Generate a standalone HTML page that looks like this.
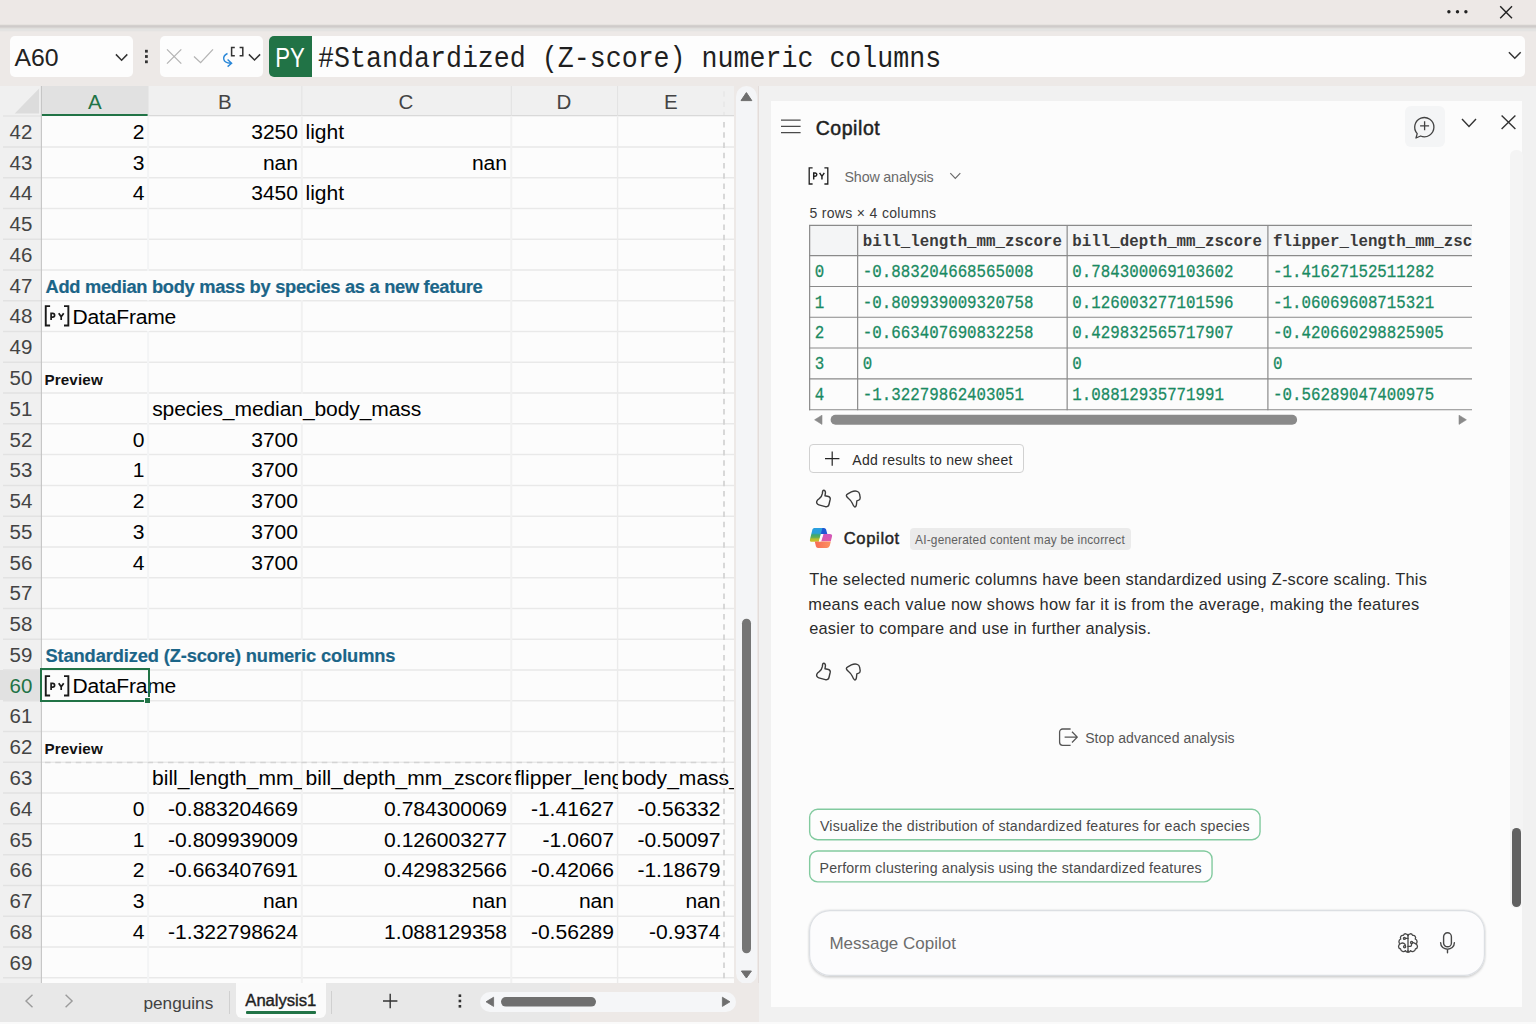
<!DOCTYPE html><html><head><meta charset="utf-8"><title>Excel</title><style>
*{box-sizing:border-box;margin:0;padding:0}
html,body{width:1536px;height:1024px;overflow:hidden;background:#fff}
body{font-family:"Liberation Sans",sans-serif;position:relative;color:#000}
.abs{position:absolute}
#top{left:0;top:0;width:1536px;height:26px;background:#ede8e6}
#topsh{left:0;top:24px;width:1536px;height:8px;background:linear-gradient(#e6e2df 0,#e6e2df 12.5%,#d3cfcd 12.5%,#d3cfcd 25%,#cfcbca 25%,#cfcbca 37.5%,#d6d3d1 37.5%,#d6d3d1 50%,#e0dedc 50%,#e0dedc 62.5%,#e3e3e2 62.5%,#e3e3e2 75%,#e4e3e2 75%,#e4e3e2 87.5%,#eae7e5 87.5%)}
#fbar{left:0;top:28px;width:1536px;height:58px;background:#ede9e7}
.wbox{background:#fdfdfd;border-radius:5px}
#sheet{left:0;top:86px;width:734px;height:897px;background:#fcfcfc;overflow:hidden}
#sheetbg{left:0;top:86px;width:759px;height:897px;background:#ede9e7}
#colhdr{left:0;top:0;width:734px;height:30px;background:#f0f0f0}
#rowhdr{left:0;top:0;width:41px;height:897px;background:#f0f0f0}
.ch{top:0;height:29px;line-height:31px;text-align:center;font-size:20.5px;color:#444}
.rh{left:0.5px;width:41px;text-align:center;font-size:20.5px;color:#444;height:30.77px;line-height:31.5px}
.hl{left:0;height:1px;background:#e3e3e3}
.vl{top:30px;width:1px;background:#e3e3e3;height:870px}
.c{white-space:nowrap;overflow:hidden;font-size:21.06px;height:30px;line-height:31.5px;color:#000}
.r{text-align:right}
.t{font-weight:bold;color:#1d6a8e;font-size:17.6px;overflow:visible}
.p{font-weight:bold;font-size:15px;overflow:visible;line-height:34px}
#pane{left:759px;top:86px;width:777px;height:936px;background:#f1f1f1}
#card{left:771px;top:101px;width:751.4px;height:905.8px;background:#fcfcfc}
#tabs{left:0;top:983px;width:759px;height:39px;background:#e8e8e8}
.g{color:#424242}
</style></head><body>
<div class="abs" id="top"></div><div class="abs" id="fbar"></div><div class="abs" id="topsh"></div>
<svg class="abs" style="left:1440px;top:0" width="90" height="26"><circle cx="8.9" cy="11.8" r="1.7" fill="#222"/><circle cx="17.5" cy="11.8" r="1.7" fill="#222"/><circle cx="25.9" cy="11.8" r="1.7" fill="#222"/><path d="M60.2 6.3 L72 18.2 M72 6.3 L60.2 18.2" stroke="#222" stroke-width="1.4" fill="none"/></svg>
<div class="abs wbox" style="left:10px;top:36px;width:123.3px;height:41px"></div>
<div class="abs" style="left:14.5px;top:36px;height:41px;line-height:44.4px;font-size:24.8px;color:#222;letter-spacing:-0.1px">A60</div>
<svg class="abs" style="left:112px;top:48px" width="20" height="20"><path d="M3.9 6.4 L9.6 12.2 L15.3 6.4" stroke="#333" stroke-width="1.5" fill="none"/></svg>
<svg class="abs" style="left:140px;top:46px" width="12" height="22"><rect x="5" y="3.8" width="2.8" height="2.8" fill="#333"/><rect x="5" y="9.1" width="2.8" height="2.8" fill="#333"/><rect x="5" y="14.4" width="2.8" height="2.8" fill="#333"/></svg>
<div class="abs wbox" style="left:160px;top:36px;width:103px;height:41px"></div>
<svg class="abs" style="left:160px;top:36px" width="103" height="41"><path d="M7 13.4 L21.3 27.6 M21.3 13.4 L7 27.6" stroke="#b4b4b4" stroke-width="1.3" fill="none"/><path d="M34 20.5 L40.6 26.7 L53 13.4" stroke="#b4b4b4" stroke-width="1.3" fill="none"/><path d="M67.5 17.5 C62 20 62 27 70.5 27.3 M67.6 23.6 L71.6 27.3 L67.6 30.6" stroke="#2b88d8" stroke-width="1.4" fill="none"/><path d="M74.8 11.6 H71.6 V19.8 H74.8 M79.6 11.6 H82.8 V19.8 H79.6" stroke="#333" stroke-width="1.5" fill="none"/><path d="M88.9 18.4 L94.5 24 L100.1 18.4" stroke="#333" stroke-width="1.5" fill="none"/></svg>
<div class="abs wbox" style="left:269px;top:36px;width:1256.3px;height:41px"></div>
<div class="abs" style="left:269px;top:36px;width:43px;height:41px;background:#217346;border-radius:5px 0 0 5px"></div>
<div class="abs" style="left:269px;top:36px;width:43px;height:41px;line-height:44.6px;text-align:center;color:#fff;font-size:27px"><span style="display:inline-block;transform:scaleX(0.82)">PY</span></div>
<div class="abs" style="left:318.1px;top:40.1px;height:41px;line-height:41px;font-family:'Liberation Mono',monospace;font-size:26.63px;color:#1f1f1f;white-space:pre;transform:scaleY(1.09);transform-origin:0 31px">#Standardized (Z-score) numeric columns</div>
<svg class="abs" style="left:1504px;top:46px" width="22" height="20"><path d="M4.9 6.3 L10.8 12.2 L16.7 6.3" stroke="#333" stroke-width="1.5" fill="none"/></svg>
<div class="abs" id="sheetbg"></div>
<div class="abs" id="sheet">
<div class="abs" id="colhdr"></div><div class="abs" id="rowhdr"></div>
<div class="abs" style="left:41px;top:0;width:107px;height:30px;background:#e1e1e1;border-bottom:2px solid #217346"></div>
<div class="abs" style="left:0;top:583.71px;width:41px;height:30.77px;background:#e1e1e1"></div>
<svg class="abs" style="left:0;top:0" width="41" height="30"><path d="M39.1 2.6 L39.1 27.6 L14.7 27.6 Z" fill="#dcdcdc"/></svg>
<div class="abs ch" style="left:41.5px;width:106.5px;color:#217346">A</div>
<div class="abs ch" style="left:148px;width:153.5px;color:#444">B</div>
<div class="abs ch" style="left:301.5px;width:209.0px;color:#444">C</div>
<div class="abs ch" style="left:510.5px;width:107.0px;color:#444">D</div>
<div class="abs ch" style="left:617.5px;width:106.5px;color:#444">E</div>
<svg class="abs" style="left:0;top:0" width="734" height="897"><line x1="3" y1="30" x2="41" y2="30" stroke="#e4e4e4" stroke-width="1.6"/><line x1="148" y1="29.8" x2="734" y2="29.8" stroke="#d2d2d2" stroke-width="1.1"/><line x1="3" y1="60.92" x2="41" y2="60.92" stroke="#e2e2e2" stroke-width="1.5"/><line x1="41" y1="60.92" x2="734" y2="60.92" stroke="#e9e9e9" stroke-width="1.5"/><line x1="3" y1="91.69" x2="41" y2="91.69" stroke="#e2e2e2" stroke-width="1.5"/><line x1="41" y1="91.69" x2="734" y2="91.69" stroke="#e9e9e9" stroke-width="1.5"/><line x1="3" y1="122.46" x2="41" y2="122.46" stroke="#e2e2e2" stroke-width="1.5"/><line x1="41" y1="122.46" x2="734" y2="122.46" stroke="#e9e9e9" stroke-width="1.5"/><line x1="3" y1="153.23" x2="41" y2="153.23" stroke="#e2e2e2" stroke-width="1.5"/><line x1="41" y1="153.23" x2="734" y2="153.23" stroke="#e9e9e9" stroke-width="1.5"/><line x1="3" y1="184.00" x2="41" y2="184.00" stroke="#e2e2e2" stroke-width="1.5"/><line x1="41" y1="184.00" x2="734" y2="184.00" stroke="#e9e9e9" stroke-width="1.5"/><line x1="3" y1="214.77" x2="41" y2="214.77" stroke="#e2e2e2" stroke-width="1.5"/><line x1="41" y1="214.77" x2="734" y2="214.77" stroke="#e9e9e9" stroke-width="1.5"/><line x1="3" y1="245.54" x2="41" y2="245.54" stroke="#e2e2e2" stroke-width="1.5"/><line x1="41" y1="245.54" x2="734" y2="245.54" stroke="#e9e9e9" stroke-width="1.5"/><line x1="3" y1="276.31" x2="41" y2="276.31" stroke="#e2e2e2" stroke-width="1.5"/><line x1="41" y1="276.31" x2="734" y2="276.31" stroke="#e9e9e9" stroke-width="1.5"/><line x1="3" y1="307.08" x2="41" y2="307.08" stroke="#e2e2e2" stroke-width="1.5"/><line x1="41" y1="307.08" x2="734" y2="307.08" stroke="#e9e9e9" stroke-width="1.5"/><line x1="3" y1="337.85" x2="41" y2="337.85" stroke="#e2e2e2" stroke-width="1.5"/><line x1="41" y1="337.85" x2="734" y2="337.85" stroke="#e9e9e9" stroke-width="1.5"/><line x1="3" y1="368.62" x2="41" y2="368.62" stroke="#e2e2e2" stroke-width="1.5"/><line x1="41" y1="368.62" x2="734" y2="368.62" stroke="#e9e9e9" stroke-width="1.5"/><line x1="3" y1="399.39" x2="41" y2="399.39" stroke="#e2e2e2" stroke-width="1.5"/><line x1="41" y1="399.39" x2="734" y2="399.39" stroke="#e9e9e9" stroke-width="1.5"/><line x1="3" y1="430.16" x2="41" y2="430.16" stroke="#e2e2e2" stroke-width="1.5"/><line x1="41" y1="430.16" x2="734" y2="430.16" stroke="#e9e9e9" stroke-width="1.5"/><line x1="3" y1="460.93" x2="41" y2="460.93" stroke="#e2e2e2" stroke-width="1.5"/><line x1="41" y1="460.93" x2="734" y2="460.93" stroke="#e9e9e9" stroke-width="1.5"/><line x1="3" y1="491.70" x2="41" y2="491.70" stroke="#e2e2e2" stroke-width="1.5"/><line x1="41" y1="491.70" x2="734" y2="491.70" stroke="#e9e9e9" stroke-width="1.5"/><line x1="3" y1="522.47" x2="41" y2="522.47" stroke="#e2e2e2" stroke-width="1.5"/><line x1="41" y1="522.47" x2="734" y2="522.47" stroke="#e9e9e9" stroke-width="1.5"/><line x1="3" y1="553.24" x2="41" y2="553.24" stroke="#e2e2e2" stroke-width="1.5"/><line x1="41" y1="553.24" x2="734" y2="553.24" stroke="#e9e9e9" stroke-width="1.5"/><line x1="3" y1="584.01" x2="41" y2="584.01" stroke="#e2e2e2" stroke-width="1.5"/><line x1="41" y1="584.01" x2="734" y2="584.01" stroke="#e9e9e9" stroke-width="1.5"/><line x1="3" y1="614.78" x2="41" y2="614.78" stroke="#e2e2e2" stroke-width="1.5"/><line x1="41" y1="614.78" x2="734" y2="614.78" stroke="#e9e9e9" stroke-width="1.5"/><line x1="3" y1="645.55" x2="41" y2="645.55" stroke="#e2e2e2" stroke-width="1.5"/><line x1="41" y1="645.55" x2="734" y2="645.55" stroke="#e9e9e9" stroke-width="1.5"/><line x1="3" y1="676.32" x2="41" y2="676.32" stroke="#e2e2e2" stroke-width="1.5"/><line x1="41" y1="676.32" x2="734" y2="676.32" stroke="#e9e9e9" stroke-width="1.5"/><line x1="3" y1="707.09" x2="41" y2="707.09" stroke="#e2e2e2" stroke-width="1.5"/><line x1="41" y1="707.09" x2="734" y2="707.09" stroke="#e9e9e9" stroke-width="1.5"/><line x1="3" y1="737.86" x2="41" y2="737.86" stroke="#e2e2e2" stroke-width="1.5"/><line x1="41" y1="737.86" x2="734" y2="737.86" stroke="#e9e9e9" stroke-width="1.5"/><line x1="3" y1="768.63" x2="41" y2="768.63" stroke="#e2e2e2" stroke-width="1.5"/><line x1="41" y1="768.63" x2="734" y2="768.63" stroke="#e9e9e9" stroke-width="1.5"/><line x1="3" y1="799.40" x2="41" y2="799.40" stroke="#e2e2e2" stroke-width="1.5"/><line x1="41" y1="799.40" x2="734" y2="799.40" stroke="#e9e9e9" stroke-width="1.5"/><line x1="3" y1="830.17" x2="41" y2="830.17" stroke="#e2e2e2" stroke-width="1.5"/><line x1="41" y1="830.17" x2="734" y2="830.17" stroke="#e9e9e9" stroke-width="1.5"/><line x1="3" y1="860.94" x2="41" y2="860.94" stroke="#e2e2e2" stroke-width="1.5"/><line x1="41" y1="860.94" x2="734" y2="860.94" stroke="#e9e9e9" stroke-width="1.5"/><line x1="3" y1="891.71" x2="41" y2="891.71" stroke="#e2e2e2" stroke-width="1.5"/><line x1="41" y1="891.71" x2="734" y2="891.71" stroke="#e9e9e9" stroke-width="1.5"/><line x1="3" y1="922.48" x2="41" y2="922.48" stroke="#e2e2e2" stroke-width="1.5"/><line x1="41" y1="922.48" x2="734" y2="922.48" stroke="#e9e9e9" stroke-width="1.5"/><line x1="148.1" y1="0" x2="148.1" y2="30" stroke="#e2e2e2" stroke-width="1"/><line x1="148.1" y1="30.5" x2="148.1" y2="897" stroke="#f3f4f5" stroke-width="2.0"/><line x1="301.85" y1="0" x2="301.85" y2="30" stroke="#e2e2e2" stroke-width="1"/><line x1="301.85" y1="30.5" x2="301.85" y2="897" stroke="#f1f1f1" stroke-width="2.0"/><line x1="511.3" y1="0" x2="511.3" y2="30" stroke="#e2e2e2" stroke-width="1"/><line x1="511.3" y1="30.5" x2="511.3" y2="897" stroke="#f1f1f1" stroke-width="2.0"/><line x1="617.6" y1="0" x2="617.6" y2="30" stroke="#e2e2e2" stroke-width="1"/><line x1="617.6" y1="30.5" x2="617.6" y2="897" stroke="#ebebeb" stroke-width="1.4"/><line x1="41.4" y1="0" x2="41.4" y2="897" stroke="#c4c4c4" stroke-width="1.1"/></svg>
<div class="abs rh" style="top:29.85px;color:#444">42</div>
<div class="abs rh" style="top:60.62px;color:#444">43</div>
<div class="abs rh" style="top:91.39px;color:#444">44</div>
<div class="abs rh" style="top:122.16px;color:#444">45</div>
<div class="abs rh" style="top:152.93px;color:#444">46</div>
<div class="abs rh" style="top:183.70px;color:#444">47</div>
<div class="abs rh" style="top:214.47px;color:#444">48</div>
<div class="abs rh" style="top:245.24px;color:#444">49</div>
<div class="abs rh" style="top:276.01px;color:#444">50</div>
<div class="abs rh" style="top:306.78px;color:#444">51</div>
<div class="abs rh" style="top:337.55px;color:#444">52</div>
<div class="abs rh" style="top:368.32px;color:#444">53</div>
<div class="abs rh" style="top:399.09px;color:#444">54</div>
<div class="abs rh" style="top:429.86px;color:#444">55</div>
<div class="abs rh" style="top:460.63px;color:#444">56</div>
<div class="abs rh" style="top:491.40px;color:#444">57</div>
<div class="abs rh" style="top:522.17px;color:#444">58</div>
<div class="abs rh" style="top:552.94px;color:#444">59</div>
<div class="abs rh" style="top:583.71px;color:#217346">60</div>
<div class="abs rh" style="top:614.48px;color:#444">61</div>
<div class="abs rh" style="top:645.25px;color:#444">62</div>
<div class="abs rh" style="top:676.02px;color:#444">63</div>
<div class="abs rh" style="top:706.79px;color:#444">64</div>
<div class="abs rh" style="top:737.56px;color:#444">65</div>
<div class="abs rh" style="top:768.33px;color:#444">66</div>
<div class="abs rh" style="top:799.10px;color:#444">67</div>
<div class="abs rh" style="top:829.87px;color:#444">68</div>
<div class="abs rh" style="top:860.64px;color:#444">69</div>
<div class="abs" style="left:146.60px;top:184.90px;width:3px;height:28.87px;background:#fcfcfc"></div>
<div class="abs" style="left:300.35px;top:184.90px;width:3px;height:28.87px;background:#fcfcfc"></div>
<div class="abs" style="left:146.60px;top:215.67px;width:3px;height:28.87px;background:#fcfcfc"></div>
<div class="abs" style="left:300.35px;top:307.98px;width:3px;height:28.87px;background:#fcfcfc"></div>
<div class="abs" style="left:146.60px;top:554.14px;width:3px;height:28.87px;background:#fcfcfc"></div>
<div class="abs" style="left:300.35px;top:554.14px;width:3px;height:28.87px;background:#fcfcfc"></div>
<div class="abs" style="left:146.60px;top:584.91px;width:3px;height:28.87px;background:#fcfcfc"></div>
<div class="abs c r" style="left:41.5px;top:29.85px;width:106.5px;padding-left:4px;padding-right:3.5px;">2</div>
<div class="abs c r" style="left:148px;top:29.85px;width:153.5px;padding-left:4px;padding-right:3.5px;">3250</div>
<div class="abs c " style="left:301.5px;top:29.85px;width:209.0px;padding-left:4px;padding-right:3.5px;">light</div>
<div class="abs c r" style="left:41.5px;top:60.62px;width:106.5px;padding-left:4px;padding-right:3.5px;">3</div>
<div class="abs c r" style="left:148px;top:60.62px;width:153.5px;padding-left:4px;padding-right:3.5px;">nan</div>
<div class="abs c r" style="left:301.5px;top:60.62px;width:209.0px;padding-left:4px;padding-right:3.5px;">nan</div>
<div class="abs c r" style="left:41.5px;top:91.39px;width:106.5px;padding-left:4px;padding-right:3.5px;">4</div>
<div class="abs c r" style="left:148px;top:91.39px;width:153.5px;padding-left:4px;padding-right:3.5px;">3450</div>
<div class="abs c " style="left:301.5px;top:91.39px;width:209.0px;padding-left:4px;padding-right:3.5px;">light</div>
<div class="abs c r" style="left:41.5px;top:337.55px;width:106.5px;padding-left:4px;padding-right:3.5px;">0</div>
<div class="abs c r" style="left:148px;top:337.55px;width:153.5px;padding-left:4px;padding-right:3.5px;">3700</div>
<div class="abs c r" style="left:41.5px;top:368.32px;width:106.5px;padding-left:4px;padding-right:3.5px;">1</div>
<div class="abs c r" style="left:148px;top:368.32px;width:153.5px;padding-left:4px;padding-right:3.5px;">3700</div>
<div class="abs c r" style="left:41.5px;top:399.09px;width:106.5px;padding-left:4px;padding-right:3.5px;">2</div>
<div class="abs c r" style="left:148px;top:399.09px;width:153.5px;padding-left:4px;padding-right:3.5px;">3700</div>
<div class="abs c r" style="left:41.5px;top:429.86px;width:106.5px;padding-left:4px;padding-right:3.5px;">3</div>
<div class="abs c r" style="left:148px;top:429.86px;width:153.5px;padding-left:4px;padding-right:3.5px;">3700</div>
<div class="abs c r" style="left:41.5px;top:460.63px;width:106.5px;padding-left:4px;padding-right:3.5px;">4</div>
<div class="abs c r" style="left:148px;top:460.63px;width:153.5px;padding-left:4px;padding-right:3.5px;">3700</div>
<div class="abs c " style="left:148px;top:676.02px;width:153.5px;padding-left:4px;padding-right:3.5px;">bill_length_mm_zscore</div>
<div class="abs c " style="left:301.5px;top:676.02px;width:209.0px;padding-left:4px;padding-right:3.5px;">bill_depth_mm_zscore</div>
<div class="abs c " style="left:510.5px;top:676.02px;width:107.0px;padding-left:4px;padding-right:3.5px;">flipper_length_mm_zscore</div>
<div class="abs c " style="left:617.5px;top:676.02px;width:116.5px;padding-left:4px;padding-right:3.5px;">body_mass_g_zscore</div>
<div class="abs c r" style="left:41.5px;top:706.79px;width:106.5px;padding-left:4px;padding-right:3.5px;">0</div>
<div class="abs c r" style="left:148px;top:706.79px;width:153.5px;padding-left:4px;padding-right:3.5px;">-0.883204669</div>
<div class="abs c r" style="left:301.5px;top:706.79px;width:209.0px;padding-left:4px;padding-right:3.5px;">0.784300069</div>
<div class="abs c r" style="left:510.5px;top:706.79px;width:107.0px;padding-left:4px;padding-right:3.5px;">-1.41627</div>
<div class="abs c r" style="left:617.5px;top:706.79px;width:106.5px;padding-left:4px;padding-right:3.5px;">-0.56332</div>
<div class="abs c r" style="left:41.5px;top:737.56px;width:106.5px;padding-left:4px;padding-right:3.5px;">1</div>
<div class="abs c r" style="left:148px;top:737.56px;width:153.5px;padding-left:4px;padding-right:3.5px;">-0.809939009</div>
<div class="abs c r" style="left:301.5px;top:737.56px;width:209.0px;padding-left:4px;padding-right:3.5px;">0.126003277</div>
<div class="abs c r" style="left:510.5px;top:737.56px;width:107.0px;padding-left:4px;padding-right:3.5px;">-1.0607</div>
<div class="abs c r" style="left:617.5px;top:737.56px;width:106.5px;padding-left:4px;padding-right:3.5px;">-0.50097</div>
<div class="abs c r" style="left:41.5px;top:768.33px;width:106.5px;padding-left:4px;padding-right:3.5px;">2</div>
<div class="abs c r" style="left:148px;top:768.33px;width:153.5px;padding-left:4px;padding-right:3.5px;">-0.663407691</div>
<div class="abs c r" style="left:301.5px;top:768.33px;width:209.0px;padding-left:4px;padding-right:3.5px;">0.429832566</div>
<div class="abs c r" style="left:510.5px;top:768.33px;width:107.0px;padding-left:4px;padding-right:3.5px;">-0.42066</div>
<div class="abs c r" style="left:617.5px;top:768.33px;width:106.5px;padding-left:4px;padding-right:3.5px;">-1.18679</div>
<div class="abs c r" style="left:41.5px;top:799.10px;width:106.5px;padding-left:4px;padding-right:3.5px;">3</div>
<div class="abs c r" style="left:148px;top:799.10px;width:153.5px;padding-left:4px;padding-right:3.5px;">nan</div>
<div class="abs c r" style="left:301.5px;top:799.10px;width:209.0px;padding-left:4px;padding-right:3.5px;">nan</div>
<div class="abs c r" style="left:510.5px;top:799.10px;width:107.0px;padding-left:4px;padding-right:3.5px;">nan</div>
<div class="abs c r" style="left:617.5px;top:799.10px;width:106.5px;padding-left:4px;padding-right:3.5px;">nan</div>
<div class="abs c r" style="left:41.5px;top:829.87px;width:106.5px;padding-left:4px;padding-right:3.5px;">4</div>
<div class="abs c r" style="left:148px;top:829.87px;width:153.5px;padding-left:4px;padding-right:3.5px;">-1.322798624</div>
<div class="abs c r" style="left:301.5px;top:829.87px;width:209.0px;padding-left:4px;padding-right:3.5px;">1.088129358</div>
<div class="abs c r" style="left:510.5px;top:829.87px;width:107.0px;padding-left:4px;padding-right:3.5px;">-0.56289</div>
<div class="abs c r" style="left:617.5px;top:829.87px;width:106.5px;padding-left:4px;padding-right:3.5px;">-0.9374</div>
<svg class="abs" style="left:0;top:0" width="734" height="897"><line x1="724" y1="5.25" x2="724" y2="29" stroke="#e8e8e8" stroke-width="1.6" stroke-dasharray="5.5 4.75"/><line x1="724" y1="36" x2="724" y2="897" stroke="#d2d2d2" stroke-width="1.7" stroke-dasharray="5.5 4.75"/><line x1="45" y1="676.5" x2="724" y2="676.5" stroke="#d4d4d4" stroke-width="1.6" stroke-dasharray="5.5 4.75"/></svg>
</div>
<div class="abs" style="left:45.50px;top:272.06px;height:30px;line-height:30px;font-size:18.3px;color:#1b6588;white-space:pre;letter-spacing:-0.294px;font-weight:bold;font-family:'Liberation Sans';-webkit-text-stroke:0.2px #1b6588">Add median body mass by species as a new feature</div>
<div class="abs" style="left:45.50px;top:641.30px;height:30px;line-height:30px;font-size:18.3px;color:#1b6588;white-space:pre;letter-spacing:-0.123px;font-weight:bold;font-family:'Liberation Sans';-webkit-text-stroke:0.2px #1b6588">Standardized (Z-score) numeric columns</div>
<div class="abs" style="left:152.20px;top:393.68px;height:30px;line-height:30px;font-size:21.06px;color:#000;white-space:pre;letter-spacing:-0.100px;font-weight:normal;font-family:'Liberation Sans';">species_median_body_mass</div>
<div class="abs" style="left:44.40px;top:365.04px;height:30px;line-height:30px;font-size:15.2px;color:#111;white-space:pre;letter-spacing:0.150px;font-weight:bold;font-family:'Liberation Sans';">Preview</div>
<div class="abs" style="left:44.40px;top:734.28px;height:30px;line-height:30px;font-size:15.2px;color:#111;white-space:pre;letter-spacing:0.150px;font-weight:bold;font-family:'Liberation Sans';">Preview</div>
<svg class="abs" style="left:43.55px;top:300.47px" width="27" height="30"><path d="M6.1 6.15 H1.75 V25.55 H6.1 M20 6.15 H24.35 V25.55 H20" fill="none" stroke="#1a1a1a" stroke-width="1.9"/><path d="M7.1 20 V13.3 H8.7 A1.9 1.9 0 0 1 8.7 17.1 H7.1" fill="none" stroke="#1a1a1a" stroke-width="1.7"/><path d="M14.7 13.2 L17.2 16.8 L19.7 13.2 M17.2 16.8 V20" fill="none" stroke="#1a1a1a" stroke-width="1.7"/></svg>
<div class="abs" style="left:72.60px;top:301.77px;height:30px;line-height:30px;font-size:21.06px;color:#000;white-space:pre;letter-spacing:-0.195px;font-weight:normal;font-family:'Liberation Sans';">DataFrame</div>
<svg class="abs" style="left:43.55px;top:669.71px" width="27" height="30"><path d="M6.1 6.15 H1.75 V25.55 H6.1 M20 6.15 H24.35 V25.55 H20" fill="none" stroke="#1a1a1a" stroke-width="1.9"/><path d="M7.1 20 V13.3 H8.7 A1.9 1.9 0 0 1 8.7 17.1 H7.1" fill="none" stroke="#1a1a1a" stroke-width="1.7"/><path d="M14.7 13.2 L17.2 16.8 L19.7 13.2 M17.2 16.8 V20" fill="none" stroke="#1a1a1a" stroke-width="1.7"/></svg>
<div class="abs" style="left:72.60px;top:671.01px;height:30px;line-height:30px;font-size:21.06px;color:#000;white-space:pre;letter-spacing:-0.195px;font-weight:normal;font-family:'Liberation Sans';">DataFrame</div>
<div class="abs" style="left:40px;top:668px;width:109.8px;height:34px;border:2px solid #217346"></div>
<div class="abs" style="left:144.2px;top:697px;width:6.2px;height:6.2px;background:#fcfcfc"></div>
<div class="abs" style="left:145.2px;top:698px;width:4.7px;height:4.7px;background:#217346"></div>
<div class="abs" style="left:736px;top:86px;width:21px;height:898px;background:#f4f5f7;border-radius:10.5px"></div>
<div class="abs" style="left:758px;top:86px;width:1px;height:936px;background:#e3dcda"></div>
<svg class="abs" style="left:736px;top:86px" width="21" height="898"><path d="M10.4 6.6 L15.8 14.6 L5 14.6 Z" fill="#6e6e6e" stroke="#6e6e6e" stroke-width="1" stroke-linejoin="round"/><rect x="6" y="532.8" width="9" height="334.5" rx="4.5" fill="#757575"/><path d="M10.4 892 L15.4 885 L5.4 885 Z" fill="#6e6e6e" stroke="#6e6e6e" stroke-width="1" stroke-linejoin="round"/></svg>
<div class="abs" id="tabs"></div>
<div class="abs" style="left:570px;top:983px;width:189px;height:39px;background:#ede9e7"></div>
<div class="abs" style="left:0;top:1022px;width:1536px;height:2px;background:#fafafa"></div>
<svg class="abs" style="left:0;top:983px" width="480" height="39"><path d="M32.5 11.8 L26 18 L32.5 24.2" stroke="#9b9b9b" stroke-width="1.4" fill="none"/><path d="M65.6 11.8 L72.1 18 L65.6 24.2" stroke="#9b9b9b" stroke-width="1.4" fill="none"/><line x1="229.5" y1="8" x2="229.5" y2="31" stroke="#d0d0d0" stroke-width="1"/><line x1="331.5" y1="8" x2="331.5" y2="31" stroke="#d0d0d0" stroke-width="1"/><path d="M383 18 H397.4 M390.2 10.8 V25.2" stroke="#333" stroke-width="1.4" fill="none"/><rect x="458.6" y="11.4" width="2.6" height="2.6" fill="#333"/><rect x="458.6" y="16.7" width="2.6" height="2.6" fill="#333"/><rect x="458.6" y="22" width="2.6" height="2.6" fill="#333"/></svg>
<div class="abs" style="left:143.5px;top:983px;height:39px;line-height:41px;font-size:17.2px;color:#424242;letter-spacing:0px">penguins</div>
<div class="abs" style="left:235.5px;top:983px;width:90.5px;height:34.5px;background:#fbfbfb;border-radius:0 0 6px 6px"></div>
<div class="abs" style="left:245.3px;top:983px;height:34px;line-height:35px;font-size:16.7px;color:#1f1f1f;-webkit-text-stroke:0.4px #1f1f1f;letter-spacing:-0.05px">Analysis1</div>
<div class="abs" style="left:245.5px;top:1011.2px;width:70.5px;height:2.6px;background:#217346;border-radius:1px"></div>
<div class="abs" style="left:480px;top:992px;width:256px;height:19.5px;background:#f5f6f8;border-radius:10px"></div>
<svg class="abs" style="left:480px;top:992px" width="256" height="20"><path d="M6 9.8 L13.6 5.2 L13.6 14.4 Z" fill="#6e6e6e" stroke="#6e6e6e" stroke-width="0.8" stroke-linejoin="round"/><rect x="21" y="5" width="95" height="9.6" rx="4.8" fill="#6f6f6f"/><path d="M250 9.8 L242.4 5.2 L242.4 14.4 Z" fill="#6e6e6e" stroke="#6e6e6e" stroke-width="0.8" stroke-linejoin="round"/></svg>
<div class="abs" id="pane"></div><div class="abs" id="card"></div>
<div class="abs" style="left:1510px;top:150px;width:12.5px;height:758px;background:#f4f4f4;border-radius:6px"></div>
<div class="abs" style="left:1512px;top:827.7px;width:8.8px;height:79px;background:#616161;border-radius:4.4px"></div>
<svg class="abs" style="left:780px;top:115px" width="22" height="22"><path d="M1 5.1 H20.6 M1 11.3 H20.6 M1 17.5 H20.6" stroke="#4a4a4a" stroke-width="1.25"/></svg>
<div class="abs" style="left:815.70px;top:112.84px;height:30px;line-height:30px;font-size:19.5px;color:#1f1f1f;white-space:pre;letter-spacing:0.553px;font-weight:normal;font-family:'Liberation Sans';-webkit-text-stroke:0.5px #1f1f1f">Copilot</div>
<div class="abs" style="left:1404.5px;top:106.3px;width:40px;height:40.7px;background:#f4f5f6;border-radius:6px"></div>
<svg class="abs" style="left:1410px;top:110.8px" width="30" height="30"><path d="M7.2 22.6 L6 27 L10.6 25 A9.6 9.6 0 1 0 7.2 22.6 Z" fill="none" stroke="#424242" stroke-width="1.3" stroke-linejoin="round"/><path d="M14.6 10.3 V19.3 M10.1 14.8 H19.1" stroke="#424242" stroke-width="1.3"/></svg>
<svg class="abs" style="left:1458px;top:112px" width="22" height="20"><path d="M4 7 L11 14.4 L18 7" stroke="#333" stroke-width="1.4" fill="none"/></svg>
<svg class="abs" style="left:1498px;top:112px" width="22" height="20"><path d="M3.6 3.4 L17.4 17 M17.4 3.4 L3.6 17" stroke="#333" stroke-width="1.4" fill="none"/></svg>
<svg class="abs" style="left:807px;top:166px" width="24" height="20"><path d="M5.6 1.9 H2.2 V18 H5.6 M17.4 1.9 H20.8 V18 H17.4" fill="none" stroke="#1f1f1f" stroke-width="1.3"/><path d="M6.7 13.4 V6.9 H8.1 A1.7 1.7 0 0 1 8.1 10.3 H6.7 M12.6 6.8 L14.95 10.3 L17.3 6.8 M14.95 10.3 V13.4" fill="none" stroke="#1f1f1f" stroke-width="1.45"/></svg>
<div class="abs" style="left:844.50px;top:161.75px;height:30px;line-height:30px;font-size:14.3px;color:#6a6a6a;white-space:pre;letter-spacing:-0.178px;font-weight:normal;font-family:'Liberation Sans';">Show analysis</div>
<svg class="abs" style="left:948px;top:168px" width="16" height="16"><path d="M2.3 5.2 L7.3 10.3 L12.3 5.2" stroke="#6a6a6a" stroke-width="1.2" fill="none"/></svg>
<div class="abs" style="left:809.40px;top:198.45px;height:30px;line-height:30px;font-size:14.0px;color:#3a3a3a;white-space:pre;letter-spacing:0.330px;font-weight:normal;font-family:'Liberation Sans';">5 rows × 4 columns</div>
<div class="abs" style="left:809px;top:224px;width:663px;height:187px;overflow:hidden">
<div class="abs" style="left:0;top:1px;width:663px;height:31px;background:#f4f5f6"></div>
<svg class="abs" style="left:0;top:0" width="663" height="187"><line x1="0" y1="1.40" x2="663" y2="1.40" stroke="#8a8a8a" stroke-width="1.2"/><line x1="0" y1="31.60" x2="663" y2="31.60" stroke="#8a8a8a" stroke-width="1.2"/><line x1="0" y1="62.50" x2="663" y2="62.50" stroke="#8a8a8a" stroke-width="1.2"/><line x1="0" y1="93.25" x2="663" y2="93.25" stroke="#8a8a8a" stroke-width="1.2"/><line x1="0" y1="124.00" x2="663" y2="124.00" stroke="#8a8a8a" stroke-width="1.2"/><line x1="0" y1="154.90" x2="663" y2="154.90" stroke="#8a8a8a" stroke-width="1.2"/><line x1="0" y1="185.75" x2="663" y2="185.75" stroke="#8a8a8a" stroke-width="1.2"/><line x1="0.65" y1="0.9" x2="0.65" y2="186.3" stroke="#8a8a8a" stroke-width="1.2"/><line x1="48.65" y1="0.9" x2="48.65" y2="186.3" stroke="#8a8a8a" stroke-width="1.2"/><line x1="258.15" y1="0.9" x2="258.15" y2="186.3" stroke="#8a8a8a" stroke-width="1.2"/><line x1="458.90" y1="0.9" x2="458.90" y2="186.3" stroke="#8a8a8a" stroke-width="1.2"/></svg>
<div class="abs" style="left:53.85px;top:3.09px;height:30px;line-height:30px;font-family:'Liberation Mono',monospace;font-size:15.8px;font-weight:bold;color:#3a3a3a;white-space:pre;transform:scaleY(1.07);transform-origin:0 19.21px;">bill_length_mm_zscore</div>
<div class="abs" style="left:263.35px;top:3.09px;height:30px;line-height:30px;font-family:'Liberation Mono',monospace;font-size:15.8px;font-weight:bold;color:#3a3a3a;white-space:pre;transform:scaleY(1.07);transform-origin:0 19.21px;">bill_depth_mm_zscore</div>
<div class="abs" style="left:464.10px;top:3.09px;height:30px;line-height:30px;font-family:'Liberation Mono',monospace;font-size:15.8px;font-weight:bold;color:#3a3a3a;white-space:pre;transform:scaleY(1.07);transform-origin:0 19.21px;">flipper_length_mm_zscore</div>
<div class="abs" style="left:5.85px;top:33.79px;height:30px;line-height:30px;font-family:'Liberation Mono',monospace;font-size:15.8px;font-weight:normal;color:#1a8a62;white-space:pre;transform:scaleY(1.13);transform-origin:0 19.21px;-webkit-text-stroke:0.25px #1a8a62;">0</div>
<div class="abs" style="left:53.85px;top:33.79px;height:30px;line-height:30px;font-family:'Liberation Mono',monospace;font-size:15.8px;font-weight:normal;color:#1a8a62;white-space:pre;transform:scaleY(1.13);transform-origin:0 19.21px;-webkit-text-stroke:0.25px #1a8a62;">-0.883204668565008</div>
<div class="abs" style="left:263.35px;top:33.79px;height:30px;line-height:30px;font-family:'Liberation Mono',monospace;font-size:15.8px;font-weight:normal;color:#1a8a62;white-space:pre;transform:scaleY(1.13);transform-origin:0 19.21px;-webkit-text-stroke:0.25px #1a8a62;">0.784300069103602</div>
<div class="abs" style="left:464.10px;top:33.79px;height:30px;line-height:30px;font-family:'Liberation Mono',monospace;font-size:15.8px;font-weight:normal;color:#1a8a62;white-space:pre;transform:scaleY(1.13);transform-origin:0 19.21px;-webkit-text-stroke:0.25px #1a8a62;">-1.41627152511282</div>
<div class="abs" style="left:5.85px;top:64.59px;height:30px;line-height:30px;font-family:'Liberation Mono',monospace;font-size:15.8px;font-weight:normal;color:#1a8a62;white-space:pre;transform:scaleY(1.13);transform-origin:0 19.21px;-webkit-text-stroke:0.25px #1a8a62;">1</div>
<div class="abs" style="left:53.85px;top:64.59px;height:30px;line-height:30px;font-family:'Liberation Mono',monospace;font-size:15.8px;font-weight:normal;color:#1a8a62;white-space:pre;transform:scaleY(1.13);transform-origin:0 19.21px;-webkit-text-stroke:0.25px #1a8a62;">-0.809939009320758</div>
<div class="abs" style="left:263.35px;top:64.59px;height:30px;line-height:30px;font-family:'Liberation Mono',monospace;font-size:15.8px;font-weight:normal;color:#1a8a62;white-space:pre;transform:scaleY(1.13);transform-origin:0 19.21px;-webkit-text-stroke:0.25px #1a8a62;">0.126003277101596</div>
<div class="abs" style="left:464.10px;top:64.59px;height:30px;line-height:30px;font-family:'Liberation Mono',monospace;font-size:15.8px;font-weight:normal;color:#1a8a62;white-space:pre;transform:scaleY(1.13);transform-origin:0 19.21px;-webkit-text-stroke:0.25px #1a8a62;">-1.06069608715321</div>
<div class="abs" style="left:5.85px;top:95.39px;height:30px;line-height:30px;font-family:'Liberation Mono',monospace;font-size:15.8px;font-weight:normal;color:#1a8a62;white-space:pre;transform:scaleY(1.13);transform-origin:0 19.21px;-webkit-text-stroke:0.25px #1a8a62;">2</div>
<div class="abs" style="left:53.85px;top:95.39px;height:30px;line-height:30px;font-family:'Liberation Mono',monospace;font-size:15.8px;font-weight:normal;color:#1a8a62;white-space:pre;transform:scaleY(1.13);transform-origin:0 19.21px;-webkit-text-stroke:0.25px #1a8a62;">-0.663407690832258</div>
<div class="abs" style="left:263.35px;top:95.39px;height:30px;line-height:30px;font-family:'Liberation Mono',monospace;font-size:15.8px;font-weight:normal;color:#1a8a62;white-space:pre;transform:scaleY(1.13);transform-origin:0 19.21px;-webkit-text-stroke:0.25px #1a8a62;">0.429832565717907</div>
<div class="abs" style="left:464.10px;top:95.39px;height:30px;line-height:30px;font-family:'Liberation Mono',monospace;font-size:15.8px;font-weight:normal;color:#1a8a62;white-space:pre;transform:scaleY(1.13);transform-origin:0 19.21px;-webkit-text-stroke:0.25px #1a8a62;">-0.420660298825905</div>
<div class="abs" style="left:5.85px;top:126.19px;height:30px;line-height:30px;font-family:'Liberation Mono',monospace;font-size:15.8px;font-weight:normal;color:#1a8a62;white-space:pre;transform:scaleY(1.13);transform-origin:0 19.21px;-webkit-text-stroke:0.25px #1a8a62;">3</div>
<div class="abs" style="left:53.85px;top:126.19px;height:30px;line-height:30px;font-family:'Liberation Mono',monospace;font-size:15.8px;font-weight:normal;color:#1a8a62;white-space:pre;transform:scaleY(1.13);transform-origin:0 19.21px;-webkit-text-stroke:0.25px #1a8a62;">0</div>
<div class="abs" style="left:263.35px;top:126.19px;height:30px;line-height:30px;font-family:'Liberation Mono',monospace;font-size:15.8px;font-weight:normal;color:#1a8a62;white-space:pre;transform:scaleY(1.13);transform-origin:0 19.21px;-webkit-text-stroke:0.25px #1a8a62;">0</div>
<div class="abs" style="left:464.10px;top:126.19px;height:30px;line-height:30px;font-family:'Liberation Mono',monospace;font-size:15.8px;font-weight:normal;color:#1a8a62;white-space:pre;transform:scaleY(1.13);transform-origin:0 19.21px;-webkit-text-stroke:0.25px #1a8a62;">0</div>
<div class="abs" style="left:5.85px;top:156.99px;height:30px;line-height:30px;font-family:'Liberation Mono',monospace;font-size:15.8px;font-weight:normal;color:#1a8a62;white-space:pre;transform:scaleY(1.13);transform-origin:0 19.21px;-webkit-text-stroke:0.25px #1a8a62;">4</div>
<div class="abs" style="left:53.85px;top:156.99px;height:30px;line-height:30px;font-family:'Liberation Mono',monospace;font-size:15.8px;font-weight:normal;color:#1a8a62;white-space:pre;transform:scaleY(1.13);transform-origin:0 19.21px;-webkit-text-stroke:0.25px #1a8a62;">-1.32279862403051</div>
<div class="abs" style="left:263.35px;top:156.99px;height:30px;line-height:30px;font-family:'Liberation Mono',monospace;font-size:15.8px;font-weight:normal;color:#1a8a62;white-space:pre;transform:scaleY(1.13);transform-origin:0 19.21px;-webkit-text-stroke:0.25px #1a8a62;">1.08812935771991</div>
<div class="abs" style="left:464.10px;top:156.99px;height:30px;line-height:30px;font-family:'Liberation Mono',monospace;font-size:15.8px;font-weight:normal;color:#1a8a62;white-space:pre;transform:scaleY(1.13);transform-origin:0 19.21px;-webkit-text-stroke:0.25px #1a8a62;">-0.56289047400975</div>
</div>
<svg class="abs" style="left:809px;top:412px" width="663" height="16"><path d="M5.6 7.8 L13 3.2 L13 12.4 Z" fill="#8a8a8a" stroke="#8a8a8a" stroke-width="0.6" stroke-linejoin="round"/><rect x="21.6" y="2.8" width="466.5" height="10" rx="5" fill="#8a8a8a"/><path d="M657.4 7.8 L650 3.2 L650 12.4 Z" fill="#8a8a8a" stroke="#8a8a8a" stroke-width="0.6" stroke-linejoin="round"/></svg>
<div class="abs" style="left:808.8px;top:443.6px;width:215px;height:29.6px;border:1px solid #d1d1d1;border-radius:4px;background:#fdfdfd"></div>
<svg class="abs" style="left:823px;top:450px" width="18" height="18"><path d="M2 8.6 H16.4 M9.2 1.4 V15.8" stroke="#242424" stroke-width="1.2"/></svg>
<div class="abs" style="left:852.30px;top:444.75px;height:30px;line-height:30px;font-size:14.0px;color:#2b2b2b;white-space:pre;letter-spacing:0.295px;font-weight:normal;font-family:'Liberation Sans';">Add results to new sheet</div>
<svg class="abs" style="left:815px;top:488.5px" width="17" height="19" viewBox="0 0 16.3 18.6"><path d="M8.2 1.2 C9.6 1.2 10.3 2.4 10 4 L9.6 6.6 L13 7.3 C14.4 7.6 15 8.8 14.7 10.2 L13.5 15.2 C13.1 16.9 11.6 17.8 9.9 17.3 L3.6 15.5 C1.9 15 1 13.5 1.6 12 C2 11 2.9 10.2 4 9.5 C5.6 8.4 6.6 6.9 7 4.6 L7.3 2.4 C7.4 1.7 7.7 1.2 8.2 1.2 Z" fill="none" stroke="#3c3c3c" stroke-width="1.4" stroke-linejoin="round"/></svg><svg class="abs" style="left:844.8px;top:489.5px" width="16.5" height="18.2" viewBox="0 0 16.3 18.6"><path d="M1.2 6.2 C0.9 5.4 1.5 4.6 2.6 4 L6.2 2 C8 1.2 10.6 0.9 12.2 1.4 C13.6 1.8 14.4 2.8 14.7 4.4 L15.2 7.6 C15.4 9.2 14.6 10.3 13.2 10.7 L11.8 11.1 L11.4 15 C11.2 16.6 10.3 17.6 9.5 17.3 C8.6 17 8 15.6 7.2 13.6 C6.4 11.6 5.3 10.3 3.6 9 C2.4 8.1 1.5 7.2 1.2 6.2 Z" fill="none" stroke="#3c3c3c" stroke-width="1.4" stroke-linejoin="round"/></svg>
<svg class="abs" style="left:809px;top:527px" width="24" height="22" viewBox="0 0 24 22"><defs><linearGradient id="lg1" x1="0" y1="0" x2="0" y2="1"><stop offset="0" stop-color="#2a9fe0"/><stop offset="0.38" stop-color="#2a9fd8"/><stop offset="0.5" stop-color="#3da773"/><stop offset="0.68" stop-color="#62ad55"/><stop offset="0.8" stop-color="#b5be30"/><stop offset="1" stop-color="#cfc32a"/></linearGradient><linearGradient id="lg2" x1="0" y1="0" x2="0" y2="1"><stop offset="0" stop-color="#cf57bd"/><stop offset="1" stop-color="#de5aa6"/></linearGradient><linearGradient id="lg3" x1="0" y1="0" x2="1" y2="0"><stop offset="0" stop-color="#f76a55"/><stop offset="1" stop-color="#fc9360"/></linearGradient></defs><path d="M10 0.9 H15 Q16.7 0.9 17.1 2.5 L18.3 7 H10 Z" fill="#1f58d3"/><path d="M5.2 0.9 H13.4 L9.7 14.8 H3 Q0.3 14.8 1 12.2 L3.4 2.6 Q3.8 0.9 5.2 0.9 Z" fill="url(#lg1)"/><path d="M14.5 7 H20.8 Q23.7 7 23 9.6 L21.8 14.3 H12.3 Z" fill="url(#lg2)"/><path d="M5.8 14.4 H21.8 L20.8 18.6 Q20.2 20.9 18 20.9 H9 Q7.3 20.9 6.9 19.3 Z" fill="url(#lg3)"/><path d="M12.5 7.2 L9.9 14.6 H11.5 L14.1 7.2 Z" fill="#fdfdfd"/></svg>
<div class="abs" style="left:843.70px;top:524.25px;height:30px;line-height:30px;font-size:16.6px;color:#242424;white-space:pre;letter-spacing:0.643px;font-weight:normal;font-family:'Liberation Sans';-webkit-text-stroke:0.45px #242424">Copilot</div>
<div class="abs" style="left:910px;top:528px;width:220.5px;height:22.2px;background:#ebebeb;border-radius:4px"></div>
<div class="abs" style="left:915.00px;top:525.28px;height:30px;line-height:30px;font-size:11.9px;color:#616161;white-space:pre;letter-spacing:0.210px;font-weight:normal;font-family:'Liberation Sans';">AI-generated content may be incorrect</div>
<div class="abs" style="left:809.20px;top:563.92px;height:30px;line-height:30px;font-size:16.4px;color:#2b2b2b;white-space:pre;letter-spacing:0.214px;font-weight:normal;font-family:'Liberation Sans';">The selected numeric columns have been standardized using Z-score scaling. This</div>
<div class="abs" style="left:808.20px;top:588.62px;height:30px;line-height:30px;font-size:16.4px;color:#2b2b2b;white-space:pre;letter-spacing:0.303px;font-weight:normal;font-family:'Liberation Sans';">means each value now shows how far it is from the average, making the features</div>
<div class="abs" style="left:809.20px;top:613.32px;height:30px;line-height:30px;font-size:16.4px;color:#2b2b2b;white-space:pre;letter-spacing:0.227px;font-weight:normal;font-family:'Liberation Sans';">easier to compare and use in further analysis.</div>
<svg class="abs" style="left:815px;top:661.5px" width="17" height="19" viewBox="0 0 16.3 18.6"><path d="M8.2 1.2 C9.6 1.2 10.3 2.4 10 4 L9.6 6.6 L13 7.3 C14.4 7.6 15 8.8 14.7 10.2 L13.5 15.2 C13.1 16.9 11.6 17.8 9.9 17.3 L3.6 15.5 C1.9 15 1 13.5 1.6 12 C2 11 2.9 10.2 4 9.5 C5.6 8.4 6.6 6.9 7 4.6 L7.3 2.4 C7.4 1.7 7.7 1.2 8.2 1.2 Z" fill="none" stroke="#3c3c3c" stroke-width="1.4" stroke-linejoin="round"/></svg><svg class="abs" style="left:844.8px;top:662.5px" width="16.5" height="18.2" viewBox="0 0 16.3 18.6"><path d="M1.2 6.2 C0.9 5.4 1.5 4.6 2.6 4 L6.2 2 C8 1.2 10.6 0.9 12.2 1.4 C13.6 1.8 14.4 2.8 14.7 4.4 L15.2 7.6 C15.4 9.2 14.6 10.3 13.2 10.7 L11.8 11.1 L11.4 15 C11.2 16.6 10.3 17.6 9.5 17.3 C8.6 17 8 15.6 7.2 13.6 C6.4 11.6 5.3 10.3 3.6 9 C2.4 8.1 1.5 7.2 1.2 6.2 Z" fill="none" stroke="#3c3c3c" stroke-width="1.4" stroke-linejoin="round"/></svg>
<svg class="abs" style="left:1057px;top:726px" width="24" height="22"><path d="M13.6 3 H5.6 A3 3 0 0 0 2.6 6 V16.3 A3 3 0 0 0 5.6 19.3 H13.6 M7.6 11.1 H20 M15 5.7 L20.3 11.1 L15 16.5" fill="none" stroke="#555" stroke-width="1.3" stroke-linejoin="round"/></svg>
<div class="abs" style="left:1085.20px;top:723.45px;height:30px;line-height:30px;font-size:14.0px;color:#565656;white-space:pre;letter-spacing:0.073px;font-weight:normal;font-family:'Liberation Sans';">Stop advanced analysis</div>
<svg class="abs" style="left:805px;top:805px" width="460" height="82"><rect x="4.65" y="4.3" width="450.4" height="30.4" rx="8" fill="#fdfdfd" stroke="#82ca9f" stroke-width="1.4"/><rect x="4.65" y="46" width="402.4" height="30.9" rx="8" fill="#fdfdfd" stroke="#82ca9f" stroke-width="1.4"/></svg>
<div class="abs" style="left:819.90px;top:810.88px;height:30px;line-height:30px;font-size:14.2px;color:#4a4a4a;white-space:pre;letter-spacing:0.202px;font-weight:normal;font-family:'Liberation Sans';">Visualize the distribution of standardized features for each species</div>
<div class="abs" style="left:819.60px;top:852.78px;height:30px;line-height:30px;font-size:14.2px;color:#4a4a4a;white-space:pre;letter-spacing:0.168px;font-weight:normal;font-family:'Liberation Sans';">Perform clustering analysis using the standardized features</div>
<div class="abs" style="left:808.8px;top:910.2px;width:676px;height:65.6px;border-radius:21px;background:#fcfcfd;box-shadow:0 0 0 1.2px #dcdfe3 inset,0 0 2px rgba(60,70,80,0.18),0 1.5px 2.5px rgba(0,0,0,0.13)"></div>
<div class="abs" style="left:829.40px;top:928.71px;height:30px;line-height:30px;font-size:17px;color:#6c6c6c;white-space:pre;letter-spacing:-0.007px;font-weight:normal;font-family:'Liberation Sans';">Message Copilot</div>
<svg class="abs" style="left:1396px;top:931px" width="24" height="24" viewBox="0 0 24 24"><g fill="none" stroke="#484848" stroke-width="1.3" stroke-linecap="round" stroke-linejoin="round"><path d="M12 3.4 V21.4"/><path d="M12 4.6 C11.4 2.4 8.2 2 7.4 4.4 C5.2 3.8 3.6 6.2 4.8 8 C2.6 8.8 2.2 11.8 4.2 12.8 C1.8 14 2 17.4 4.6 18 C5 20.6 8 21.4 9.4 19.6 C10.4 21.6 12 21.4 12 20"/><path d="M12 4.6 C12.6 2.4 15.8 2 16.6 4.4 C18.8 3.8 20.4 6.2 19.2 8 C21.4 8.8 21.8 11.8 19.8 12.8 C22.2 14 22 17.4 19.4 18 C19 20.6 16 21.4 14.6 19.6 C13.6 21.6 12 21.4 12 20"/><path d="M12 7.4 H9.4"/><circle cx="8.4" cy="7.4" r="1"/><path d="M5 12.4 C7 11.4 9.4 12.4 9.4 14.6"/><circle cx="8.6" cy="15.8" r="1.1"/><path d="M12 15.4 H14.4 C15.4 15.4 15.6 14 15.6 12.8"/><circle cx="15.6" cy="11.6" r="1.1"/><path d="M19.4 12.6 C18.4 12 17.4 11.8 16.8 11.6"/></g></svg>
<svg class="abs" style="left:1437px;top:930px" width="22" height="26"><g fill="none" stroke="#484848" stroke-width="1.4" stroke-linecap="round"><rect x="6.6" y="2.8" width="7.8" height="14" rx="3.9"/><path d="M3.6 12.6 C3.6 21.4 17.4 21.4 17.4 12.6 M10.5 19.4 V22.8"/></g></svg>
</body></html>
